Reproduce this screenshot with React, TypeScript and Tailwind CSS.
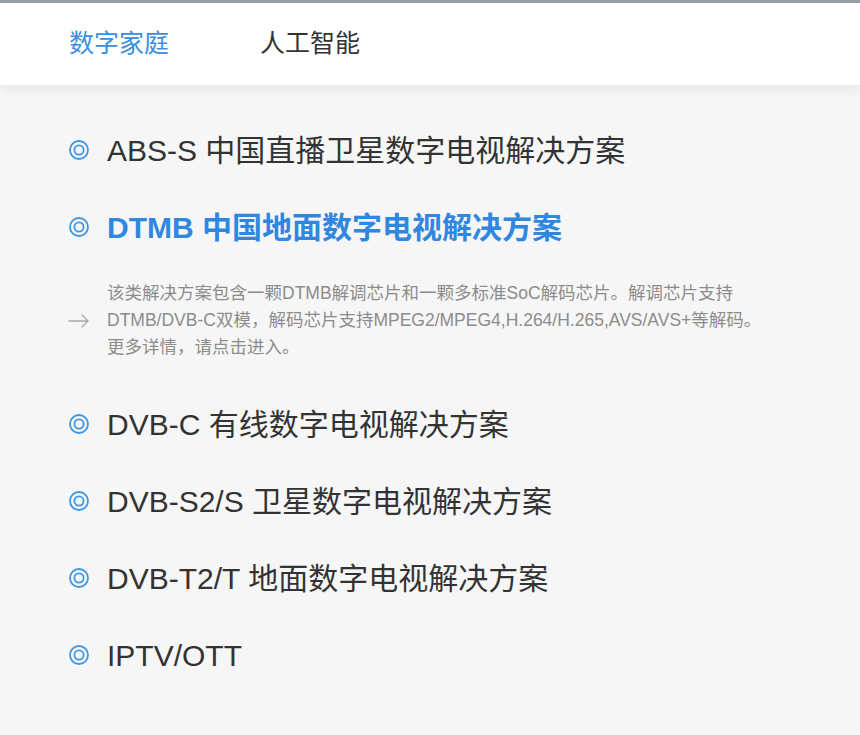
import React from 'react';

const font = { fontFamily: '"Liberation Sans", Arial, "Noto Sans CJK SC", sans-serif' };

// Double ring bullet
const Ring = () => (
    <svg className="h-[22px] w-[22px] shrink-0 text-[#3d97e4]" viewBox="0 0 22 22" fill="none" stroke="currentColor" strokeWidth={1.8}>
        <circle cx="11" cy="11" r="9" />
        <circle cx="11" cy="11" r="4.6" />
    </svg>
);

const Arrow = () => (
    <svg className="h-[22px] w-[22px] shrink-0 text-[#a8a8a8]" viewBox="0 0 22 22" fill="none" stroke="currentColor" strokeWidth={1.3}>
        <path d="M1 11h19M14 5l6 6-6 6" strokeLinecap="round" strokeLinejoin="round" />
    </svg>
);

const items = [
    { title: 'ABS-S 中国直播卫星数字电视解决方案' },
    {
        title: 'DTMB 中国地面数字电视解决方案',
        active: true,
        desc: '该类解决方案包含一颗DTMB解调芯片和一颗多标准SoC解码芯片。解调芯片支持DTMB/DVB-C双模，解码芯片支持MPEG2/MPEG4,H.264/H.265,AVS/AVS+等解码。更多详情，请点击进入。',
    },
    { title: 'DVB-C 有线数字电视解决方案' },
    { title: 'DVB-S2/S 卫星数字电视解决方案' },
    { title: 'DVB-T2/T 地面数字电视解决方案' },
    { title: 'IPTV/OTT' },
];

export default function App() {
    return (
        <div className="min-h-[735px] w-[860px] bg-[#f6f6f6]" style={font}>
            <div className="h-[3px] bg-[#97a1a8]" />
            <header className="relative z-10 flex h-[82px] items-center gap-[91px] bg-white pl-[69px] shadow-[0_4px_12px_rgba(0,0,0,0.07)]">
                <a className="text-[25px] text-[#3a8ee0]">数字家庭</a>
                <a className="text-[25px] text-[#333]">人工智能</a>
            </header>

            <ul className="flex flex-col pl-[68px] pt-[45px]">
                {items.map((item, i) => (
                    <li key={i} className="flex flex-col">
                        <div className="flex h-[40px] items-center gap-[17px]">
                            <Ring />
                            <span className={item.active ? 'text-[30px] font-bold text-[#2f87e0]' : 'text-[30px] text-[#333]'}>
                                {item.title}
                            </span>
                        </div>
                        {item.desc && (
                            <div className="flex items-center gap-[17px] pt-[33px] pb-[6px]">
                                <Arrow />
                                <p className="w-[665px] text-[17.5px] leading-[27px] text-[#8c8c8c]">{item.desc}</p>
                            </div>
                        )}
                        <div className="h-[37px]" />
                    </li>
                ))}
            </ul>
        </div>
    );
}
